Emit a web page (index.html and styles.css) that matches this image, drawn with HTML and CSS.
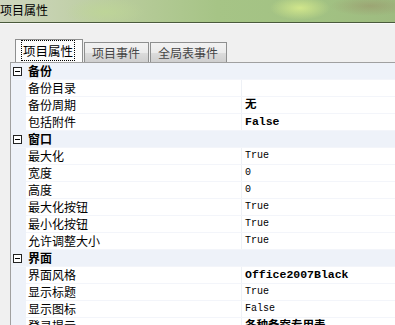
FILE: index.html
```html
<!DOCTYPE html>
<html lang="zh">
<head>
    <meta charset="UTF-8">
    <title>项目属性</title>
    <link rel="stylesheet" href="styles.css">
</head>
<body>
    <div class="titlebar">项目属性</div>

    <div class="panel">
        <div class="tabs">
            <div class="tab active"><span class="focus">项目属性</span></div>
            <div class="tab">项目事件</div>
            <div class="tab">全局表事件</div>
        </div>

        <div class="grid">
            <div class="cat"><span class="toggle"></span>备份</div>
            <div class="row"><div class="name">备份目录</div><div class="value"></div></div>
            <div class="row"><div class="name">备份周期</div><div class="value changed">无</div></div>
            <div class="row"><div class="name">包括附件</div><div class="value changed">False</div></div>

            <div class="cat"><span class="toggle"></span>窗口</div>
            <div class="row"><div class="name">最大化</div><div class="value">True</div></div>
            <div class="row"><div class="name">宽度</div><div class="value">0</div></div>
            <div class="row"><div class="name">高度</div><div class="value">0</div></div>
            <div class="row"><div class="name">最大化按钮</div><div class="value">True</div></div>
            <div class="row"><div class="name">最小化按钮</div><div class="value">True</div></div>
            <div class="row"><div class="name">允许调整大小</div><div class="value">True</div></div>

            <div class="cat"><span class="toggle"></span>界面</div>
            <div class="row"><div class="name">界面风格</div><div class="value changed">Office2007Black</div></div>
            <div class="row"><div class="name">显示标题</div><div class="value">True</div></div>
            <div class="row"><div class="name">显示图标</div><div class="value">False</div></div>
            <div class="row"><div class="name">登录提示</div><div class="value changed">各种备案专用表</div></div>
        </div>
    </div>
</body>
</html>
```

FILE: styles.css
```css
body {
    margin: 0;
    width: 395px;
    height: 325px;
    overflow: hidden;
    background-color: #f0f0f0;
    font-family: "Noto Sans CJK SC", "Liberation Sans", sans-serif;
    font-size: 12px;
    color: #000;
}

/* window caption with the green theme picture */
.titlebar {
    height: 22px;
    line-height: 20px;
    border-bottom: 1px solid #4a5a3c;
    background:
        radial-gradient(ellipse 40px 14px at 105px 12px, rgba(190, 214, 150, 0.8), rgba(190, 214, 150, 0)),
        radial-gradient(ellipse 30px 12px at 300px 8px, rgba(214, 234, 140, 0.9), rgba(214, 234, 140, 0)),
        radial-gradient(ellipse 40px 10px at 370px 6px, rgba(150, 120, 90, 0.35), rgba(150, 120, 90, 0)),
        linear-gradient(to right, #cfd6bf 0%, #b9cc9c 30%, #a6c486 55%, #a2c283 80%, #9ebb80 100%);
}

.panel {
    padding-top: 15px;
    border-top: 1px solid #fafafa;
}

.tabs {
    display: flex;
    align-items: flex-end;
    height: 23px;
    padding-left: 15px;
}

.tab {
    height: 19px;
    line-height: 19px;
    padding: 0 8px 0 7px;
    margin-right: 1px;
    border: 1px solid #8e8f8f;
    border-bottom: none;
    background: linear-gradient(#f2f2f2, #ebebeb 50%, #dcdcdc 51%, #cfcfcf);
    color: #454545;
}

.tab.active {
    height: 22px;
    line-height: 21px;
    padding: 0 7px 0 5px;
    background: #fcfcfc;
    color: #000;
    font-size: 12.5px;
}

.focus {
    border: 1px dotted #000;
    padding: 0 1px;
}

.grid {
    margin-left: 10px;
    border-top: 1px solid #a0a0a0;
    border-left: 1px solid #a0a0a0;
    background-color: #eef2f9;
}

.cat,
.row {
    height: 16px;
    border-bottom: 1px solid #f3f5fa;
    display: flex;
}

.cat {
    align-items: center;
    font-weight: bold;
    background-color: #eef2f9;
    line-height: 16px;
}

.toggle {
    width: 7px;
    height: 7px;
    border: 1px solid #222;
    margin: 0 6px 0 2px;
    position: relative;
    background: #fff;
}

.toggle::after {
    content: "";
    position: absolute;
    left: 1px;
    top: 3px;
    width: 5px;
    height: 1px;
    background: #000;
}

.row {
    margin-left: 15px;
    background-color: #fff;
    line-height: 16px;
}

.name {
    width: 213px;
    padding-left: 2px;
    border-right: 1px solid #eef1f6;
}

.value {
    flex: 1;
    padding-left: 3px;
    font-family: "Liberation Mono", monospace;
    font-size: 10px;
}

.value.changed {
    font-weight: bold;
    font-size: 11.5px;
    font-family: "Liberation Mono", "Noto Sans CJK SC", monospace;
}
```
